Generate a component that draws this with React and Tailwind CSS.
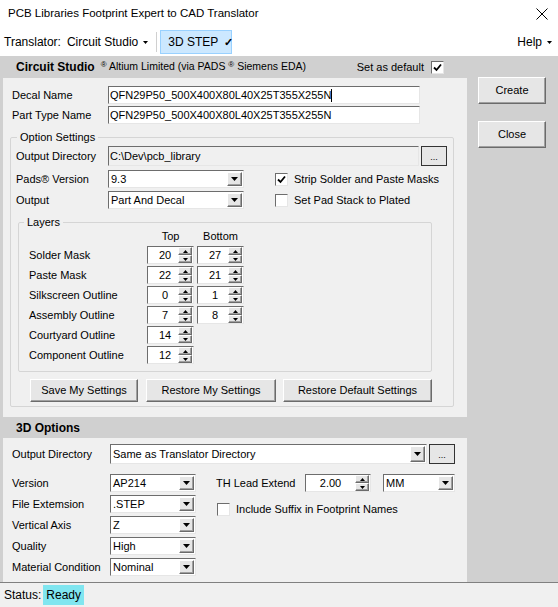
import React from "react";

const inset = "border border-t-[#6d6d6d] border-l-[#6d6d6d] border-r-[#e6e6e6] border-b-[#e6e6e6]";
const raised = "border border-t-white border-l-white border-r-[#6b6b6b] border-b-[#6b6b6b] bg-[#e6e6e6] shadow-[inset_-1px_-1px_0_#a0a0a0]";

function Tri({ up, w = 7, h = 4 }) {
    return (
        <svg width={w} height={h} viewBox={`0 0 ${w} ${h}`}>
            <path d={up ? `M0 ${h}H${w}L${w / 2} 0Z` : `M0 0H${w}L${w / 2} ${h}Z`} fill="#000" />
        </svg>
    );
}

function TextBox({ value, className = "", bg = "bg-white", cursor }) {
    return (
        <div className={`${inset} ${bg} h-full flex items-center pl-[1px] ${className}`}>
            <span className="whitespace-nowrap">{value}</span>
            {cursor && <span className="w-px h-[13px] bg-black" />}
        </div>
    );
}

function Combo({ value, className = "" }) {
    return (
        <div className={`${inset} bg-white h-full flex items-center ${className}`}>
            <span className="flex-1 pl-[2px] whitespace-nowrap overflow-hidden">{value}</span>
            <div className={`${raised} w-[15px] h-[calc(100%-2px)] mr-[1px] flex items-center justify-center`}>
                <Tri />
            </div>
        </div>
    );
}

function Spin({ value, className = "", pad = "pl-[4px]" }) {
    return (
        <div className={`${inset} bg-white h-full flex items-center ${className}`}>
            <span className={`flex-1 text-center ${pad}`}>{value}</span>
            <div className="w-[14px] h-full flex flex-col mr-[1px]">
                <div className={`${raised} flex-1 flex items-center justify-center`}>
                    <Tri up w={5} h={3} />
                </div>
                <div className={`${raised} flex-1 flex items-center justify-center`}>
                    <Tri w={5} h={3} />
                </div>
            </div>
        </div>
    );
}

function Check({ checked }) {
    return (
        <div className={`${inset} bg-white w-[13px] h-[13px] flex items-center justify-center shrink-0`}>
            {checked && (
                <svg width="9" height="9" viewBox="0 0 9 9">
                    <path d="M1 4.5L3.5 7L8 1.5" stroke="#000" strokeWidth="1.8" fill="none" />
                </svg>
            )}
        </div>
    );
}

function Btn({ children, className = "" }) {
    return (
        <div className={`${raised} flex items-center justify-center whitespace-nowrap ${className}`}>
            {children}
        </div>
    );
}

const layers = [
    ["Solder Mask", "20", "27"],
    ["Paste Mask", "22", "21"],
    ["Silkscreen Outline", "0", "1"],
    ["Assembly Outline", "7", "8"],
    ["Courtyard Outline", "14", null],
    ["Component Outline", "12", null],
];

const stepRows = [
    ["Version", "AP214"],
    ["File Extemsion", ".STEP"],
    ["Vertical Axis", "Z"],
    ["Quality", "High"],
    ["Material Condition", "Nominal"],
];

export default function App() {
    return (
        <div className="w-[558px] h-[607px] flex flex-col bg-[#f0f0f0] text-black text-[11px] font-['Liberation_Sans',Arial,sans-serif] overflow-hidden">
            {/* title bar */}
            <div className="h-[28px] bg-white flex items-center pl-[8px] pr-[10px] text-[11.5px]">
                <span>PCB Libraries Footprint Expert to CAD Translator</span>
                <svg className="ml-auto" width="12" height="12" viewBox="0 0 12 12">
                    <path d="M0.5 0.5L11.5 11.5M11.5 0.5L0.5 11.5" stroke="#000" strokeWidth="1" />
                </svg>
            </div>

            {/* menu */}
            <div className="h-[28px] bg-white flex items-center pl-[4px] pr-[6px] text-[12px] whitespace-nowrap">
                <span>Translator:</span>
                <span className="ml-[6px]">Circuit Studio</span>
                <span className="ml-[5px]"><Tri w={5} h={3} /></span>
                <div className="ml-[8px] w-px h-[20px] bg-[#d0d0d0]" />
                <div className="ml-[3px] h-[24px] w-[72px] bg-[#cce8ff] border border-[#99d1ff] flex items-center pl-[7px] shrink-0">
                    <span>3D STEP</span>
                    <span className="ml-[6px] font-bold text-[11px]">✓</span>
                </div>
                <span className="ml-auto">Help</span>
                <span className="ml-[5px]"><Tri w={5} h={3} /></span>
            </div>

            {/* body */}
            <div className="h-[526px] flex bg-[#d0d0d0]">
                <div className="w-[467px] pl-[3px] flex flex-col">
                    <div className="h-[22px] flex items-center pl-[13px] pr-[23px]">
                        <span className="font-bold text-[12px]">Circuit Studio</span>
                        <span className="ml-[6px] text-[10.5px]">
                            <span className="text-[8px] align-top">®</span> Altium Limited (via PADS <span className="text-[8px] align-top">®</span> Siemens EDA)
                        </span>
                        <span className="ml-auto mr-[7px]">Set as default</span>
                        <Check checked />
                    </div>

                    <div className="h-[339px] bg-[#f0f0f0] pt-[8px]">
                        <div className="h-[18px] flex items-center pl-[9px]">
                            <span className="w-[96px]">Decal Name</span>
                            <TextBox value="QFN29P50_500X400X80L40X25T355X255N" className="w-[312px]" cursor />
                        </div>
                        <div className="h-[18px] mt-[2px] flex items-center pl-[9px]">
                            <span className="w-[96px]">Part Type Name</span>
                            <TextBox value="QFN29P50_500X400X80L40X25T355X255N" className="w-[312px]" />
                        </div>

                        <fieldset className="mt-[6px] ml-[7px] w-[444px] border border-[#d5d5d5] rounded-[2px] pb-[4px]">
                            <legend className="ml-[6px] px-[3px] leading-[14px]">Option Settings</legend>
                            <div className="h-[20px] mt-[2px] flex items-center pl-[5px]">
                                <span className="w-[92px]">Output Directory</span>
                                <TextBox value="C:\Dev\pcb_library" bg="bg-[#f0f0f0]" className="w-[311px]" />
                                <div className="ml-[2px] w-[26px] h-[20px] border border-[#333] bg-[#e6e6e6] flex items-end justify-center pb-[3px] text-[9px] leading-none">...</div>
                            </div>
                            <div className="h-[18px] mt-[4px] flex items-center pl-[5px]">
                                <span className="w-[92px]">Pads® Version</span>
                                <Combo value="9.3" className="w-[136px]" />
                                <div className="ml-[31px]"><Check checked /></div>
                                <span className="ml-[6px]">Strip Solder and Paste Masks</span>
                            </div>
                            <div className="h-[18px] mt-[3px] flex items-center pl-[5px]">
                                <span className="w-[92px]">Output</span>
                                <Combo value="Part And Decal" className="w-[136px]" />
                                <div className="ml-[31px]"><Check /></div>
                                <span className="ml-[6px]">Set Pad Stack to Plated</span>
                            </div>

                            <fieldset className="mt-[6px] ml-[7px] w-[414px] border border-[#d5d5d5] rounded-[2px] pb-[7px]">
                                <legend className="ml-[5px] px-[3px] leading-[14px]">Layers</legend>
                                <div className="h-[14px] flex items-center">
                                    <span className="w-[128px]" />
                                    <span className="w-[47px] text-center">Top</span>
                                    <span className="w-[47px] ml-[3px] text-center">Bottom</span>
                                </div>
                                <div className="mt-[3px] flex flex-col gap-[2px]">
                                    {layers.map(([name, top, bottom]) => (
                                        <div key={name} className="h-[18px] flex items-center">
                                            <span className="w-[128px] pl-[10px]">{name}</span>
                                            <Spin value={top} className="w-[47px]" />
                                            {bottom && <Spin value={bottom} className="w-[47px] ml-[3px]" />}
                                        </div>
                                    ))}
                                </div>
                            </fieldset>

                            <div className="mt-[7px] pl-[19px] flex items-center">
                                <Btn className="w-[108px] h-[23px]">Save My Settings</Btn>
                                <Btn className="w-[130px] h-[23px] ml-[8px]">Restore My Settings</Btn>
                                <Btn className="w-[149px] h-[23px] ml-[7px]">Restore Default Settings</Btn>
                            </div>
                        </fieldset>
                    </div>

                    <div className="h-[21px] flex items-center pl-[13px]">
                        <span className="font-bold text-[12px]">3D Options</span>
                    </div>

                    <div className="h-[144px] bg-[#f0f0f0] pt-[6px]">
                        <div className="h-[20px] flex items-center pl-[9px]">
                            <span className="w-[98px]">Output Directory</span>
                            <Combo value="Same as Translator Directory" className="w-[317px]" />
                            <div className="ml-[2px] w-[26px] h-[20px] border border-[#333] bg-[#e6e6e6] flex items-end justify-center pb-[3px] text-[9px] leading-none">...</div>
                        </div>
                        <div className="mt-[10px] flex">
                            <div className="flex flex-col gap-[3px]">
                                {stepRows.map(([name, val]) => (
                                    <div key={name} className="h-[18px] flex items-center pl-[9px]">
                                        <span className="w-[98px]">{name}</span>
                                        <Combo value={val} className="w-[86px]" />
                                    </div>
                                ))}
                            </div>
                            <div className="ml-[20px] flex flex-col">
                                <div className="h-[18px] flex items-center">
                                    <span className="w-[89px]">TH Lead Extend</span>
                                    <Spin value="2.00" className="w-[66px]" pad="pl-0" />
                                    <Combo value="MM" className="w-[72px] ml-[12px]" />
                                </div>
                                <div className="mt-[9px] flex items-center pl-[1px]">
                                    <Check />
                                    <span className="ml-[6px]">Include Suffix in Footprint Names</span>
                                </div>
                            </div>
                        </div>
                    </div>
                </div>

                <div className="flex-1 flex flex-col pt-[21px] pl-[11px]">
                    <Btn className="w-[68px] h-[27px]">Create</Btn>
                    <Btn className="w-[68px] h-[27px] mt-[17px]">Close</Btn>
                </div>
            </div>

            {/* status */}
            <div className="flex-1 border-t border-[#808080] flex items-center pl-[4px] text-[12px]">
                <span>Status:</span>
                <span className="ml-[2px] h-[20px] px-[3px] bg-[#80e6f0] flex items-center">Ready</span>
            </div>
        </div>
    );
}
